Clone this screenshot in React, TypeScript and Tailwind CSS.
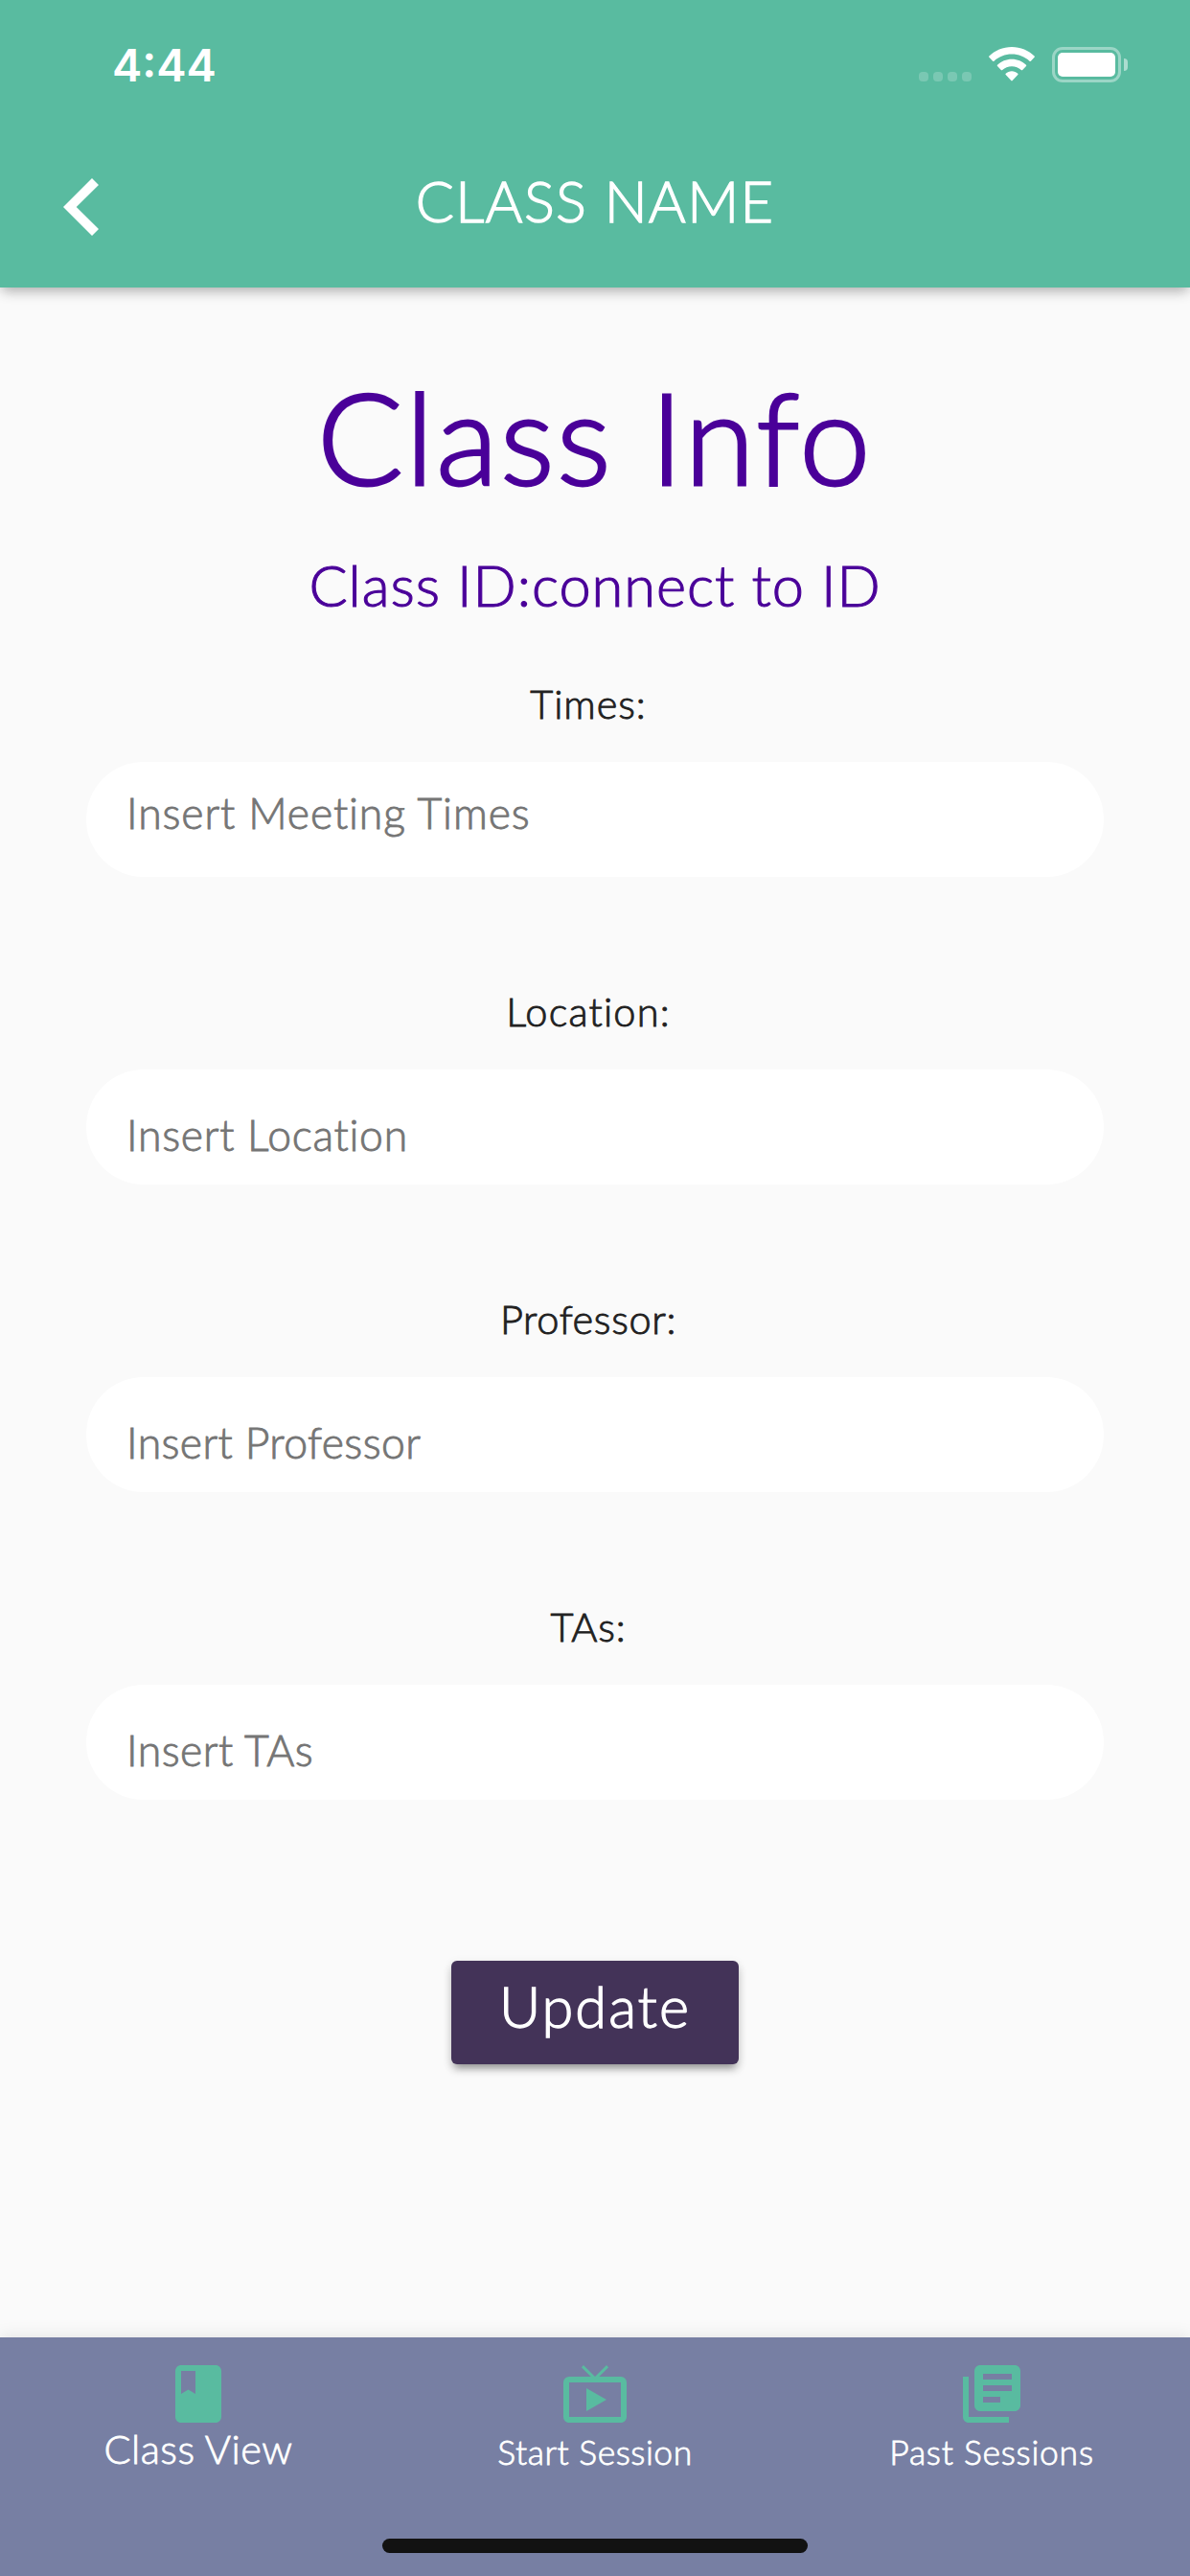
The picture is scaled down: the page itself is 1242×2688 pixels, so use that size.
import React from "react";
import { MdBook, MdLibraryBooks, MdLiveTv } from "react-icons/md";

type FieldProps = {
  label: string;
  labelClass: string;
  placeholder: string;
  inputClass: string;
};

function StatusBar() {
  return (
    <div className="flex h-[136px] items-start justify-between pl-[117px] pr-[65px]">
      <span className="font-['Inter',sans-serif] text-[47px] font-semibold leading-[136px]">4:44</span>
      <div className="flex items-end pt-[49px]">
        <div className="mb-px mr-[18px] flex gap-[5px]">
          {[0, 1, 2, 3].map((i) => (
            <span key={i} className="size-[10px] rounded-[4px] bg-white/20" />
          ))}
        </div>
        <svg className="mb-px mr-[18px] h-[36px] w-[48px]" viewBox="0 0 48 36" fill="#fff">
          <path d="M24 0C33.2 0 41.600 3.600 47.600 9.500Q48.200 10.200 47.600 10.800L43.900 14.700Q43.200 15.300 42.500 14.700C37.600 10.300 31.100 7.600 24 7.600S10.400 10.300 5.500 14.700Q4.800 15.300 4.100 14.700L.4 10.800Q-.2 10.200.4 9.500C6.400 3.600 14.800 0 24 0Z" />
          <path d="M24 12.700C29.800 12.700 35.100 15 39 18.700Q39.600 19.300 39 20L35.200 23.900Q34.500 24.500 33.800 23.900C31.200 21.600 27.800 20.200 24 20.200S16.800 21.600 14.200 23.900Q13.500 24.500 12.800 23.900L9 20Q8.400 19.300 9 18.700C12.900 15 18.200 12.700 24 12.700Z" />
          <path d="M24 25.300C26.400 25.300 28.600 26.200 30.300 27.700Q31 28.400 30.300 29.100L24.700 35.100Q24 35.800 23.300 35.100L17.700 29.100Q17 28.400 17.700 27.700C19.400 26.200 21.600 25.300 24 25.300Z" />
        </svg>
        <div className="flex items-center">
          <div className="h-[37px] w-[72px] rounded-[11px] border-[3px] border-white/40 p-[3px]">
            <div className="h-full w-full rounded-[5px] bg-white" />
          </div>
          <div className="ml-[3px] h-[13px] w-[4px] rounded-r-[4px] bg-white/50" />
        </div>
      </div>
    </div>
  );
}

function Field({ label, labelClass, placeholder, inputClass }: FieldProps) {
  return (
    <label className="flex w-full flex-col items-center">
      <span
        className={`mr-[14px] block whitespace-nowrap text-[41.5px] leading-[48px] text-[#212121] [-webkit-text-stroke-width:0.9px] ${labelClass}`}
      >
        {label}
      </span>
      <input
        placeholder={placeholder}
        className={`mt-[37px] block h-[120px] w-[1062px] rounded-full bg-white pl-[42px] text-[44.5px] font-light outline-none [-webkit-text-stroke-width:0.9px] placeholder:text-[#757575] ${inputClass}`}
      />
    </label>
  );
}

export default function App() {
  return (
    <div className="flex h-[2688px] w-[1242px] flex-col overflow-hidden bg-[#fafafa] font-['Lato',sans-serif] font-light">
      <header className="relative z-10 h-[300px] bg-[#59bba0] text-white shadow-[0_6px_12px_-3px_rgba(0,0,0,0.22),0_3px_15px_rgba(0,0,0,0.14)]">
        <StatusBar />
        <div className="grid h-[144px] grid-cols-[1fr_auto_1fr] items-center">
          <button aria-label="Back" className="ml-[66px] mt-[16px] w-[37px]">
            <svg className="h-[60px] w-[37px]" viewBox="0 0 37 60" fill="#fff">
              <path d="M30 0L37 7L13.700 30L37 53L30 60L0 30Z" />
            </svg>
          </button>
          <h1 className="pt-[2px] text-[59.5px] leading-[72px] tracking-[1.3px] [-webkit-text-stroke-width:1.3px]">
            CLASS NAME
          </h1>
        </div>
      </header>

      <main className="flex flex-1 flex-col items-center">
        <h2 className="mt-[75px] text-[133px] leading-[160px] tracking-[2.45px] text-[#4a0099] [-webkit-text-stroke-width:2.8px]">
          Class Info
        </h2>
        <p className="mt-[35px] text-[59.5px] leading-[80px] tracking-[0.96px] text-[#4a0099] [-webkit-text-stroke-width:1.1px]">
          Class ID:connect to ID
        </p>
        <form className="mt-[60px] flex w-full flex-col items-center gap-[116px]">
          <Field
            label="Times:"
            labelClass="tracking-[0.94px]"
            placeholder="Insert Meeting Times"
            inputClass="pb-[16px] tracking-[0.9px]"
          />
          <Field
            label="Location:"
            labelClass="tracking-[1.19px]"
            placeholder="Insert Location"
            inputClass="pt-[14px] tracking-[0.74px]"
          />
          <Field
            label="Professor:"
            labelClass="tracking-[0.64px]"
            placeholder="Insert Professor"
            inputClass="pt-[14px] tracking-[0.4px]"
          />
          <Field
            label="TAs:"
            labelClass="tracking-[0.8px]"
            placeholder="Insert TAs"
            inputClass="pt-[14px] tracking-[0.49px]"
          />
        </form>
        <button className="mt-[168px] h-[108px] w-[300px] rounded-[6px] bg-[#433358] pb-[15px] text-[59.5px] leading-[60px] tracking-[2px] text-white shadow-[0_9px_6px_-6px_rgba(0,0,0,0.2),0_6px_9px_rgba(0,0,0,0.2),0_3px_12px_rgba(0,0,0,0.08)] [-webkit-text-stroke-width:1.3px]">
          Update
        </button>
      </main>

      <nav className="flex h-[249px] flex-col items-center justify-between bg-[#777fa3] pb-[24px] pt-[23px] text-white shadow-[0_-3px_15px_rgba(0,0,0,0.08)] [-webkit-text-stroke-width:0.8px]">
        <div className="grid w-full grid-cols-3">
          <div className="flex flex-col items-center">
            <MdBook className="size-[72px] text-[#59bba0]" />
            <span className="-mt-[3px] text-[41.5px] leading-[48px] tracking-[0.5px]">Class View</span>
          </div>
          <div className="flex flex-col items-center">
            <MdLiveTv className="size-[72px] text-[#59bba0]" />
            <span className="mt-px text-[35.5px] leading-[48px] tracking-[0.52px]">Start Session</span>
          </div>
          <div className="flex flex-col items-center">
            <MdLibraryBooks className="size-[72px] text-[#59bba0]" />
            <span className="mt-px text-[35.5px] leading-[48px] tracking-[0.74px]">Past Sessions</span>
          </div>
        </div>
        <div className="h-[15px] w-[444px] rounded-full bg-[#121212]" />
      </nav>
    </div>
  );
}
